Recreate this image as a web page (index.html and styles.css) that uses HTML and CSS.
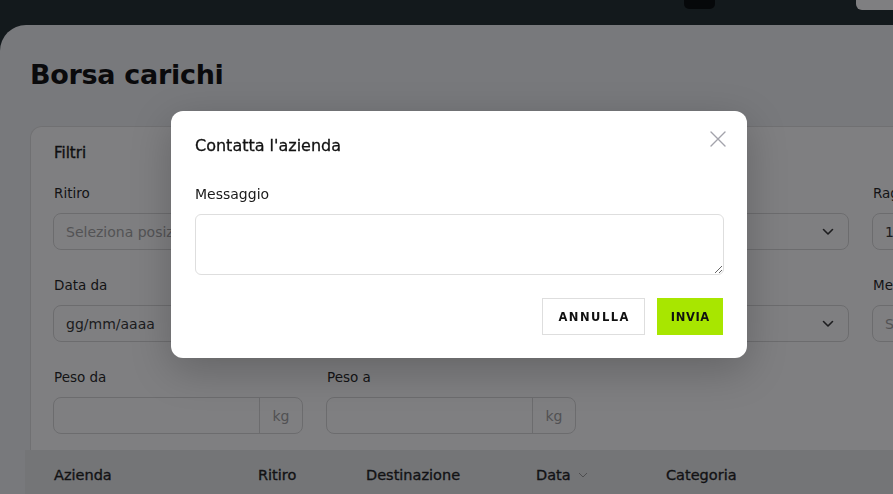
FILE: index.html
```html
<!DOCTYPE html>
<html lang="it">
<head>
<meta charset="utf-8">
<title>Borsa carichi</title>
<link rel="stylesheet" href="styles.css">
</head>
<body>
<header class="topbar">
  <span class="tb-dark"></span>
  <span class="tb-light"></span>
</header>
<main class="main">
  <h1 class="page-title">Borsa carichi</h1>
  <section class="card">
    <h2 class="card-title">Filtri</h2>
    <div class="filters">
      <div class="field">
        <label class="label">Ritiro</label>
        <div class="input"><span class="ph">Seleziona posizione</span></div>
      </div>
      <div class="field">
        <label class="label">Destinazione</label>
        <div class="input"></div>
      </div>
      <div class="field">
        <label class="label">Categoria</label>
        <div class="input select"><span></span>
          <svg class="chev" viewBox="0 0 12 8" width="12" height="8"><path d="M1.5 1.5 L6 6 L10.5 1.5" fill="none" stroke="#333" stroke-width="1.6" stroke-linecap="round" stroke-linejoin="round"/></svg>
        </div>
      </div>
      <div class="field">
        <label class="label">Raggio</label>
        <div class="input"><span class="val">100</span></div>
      </div>
      <div class="field">
        <label class="label">Data da</label>
        <div class="input"><span class="val">gg/mm/aaaa</span></div>
      </div>
      <div class="field">
        <label class="label">Data a</label>
        <div class="input"></div>
      </div>
      <div class="field">
        <label class="label">Tipo</label>
        <div class="input select"><span></span>
          <svg class="chev" viewBox="0 0 12 8" width="12" height="8"><path d="M1.5 1.5 L6 6 L10.5 1.5" fill="none" stroke="#333" stroke-width="1.6" stroke-linecap="round" stroke-linejoin="round"/></svg>
        </div>
      </div>
      <div class="field">
        <label class="label">Mezzo</label>
        <div class="input"><span class="ph">Seleziona</span></div>
      </div>
      <div class="field">
        <label class="label">Peso da</label>
        <div class="input addon"><span class="grow"></span><span class="unit">kg</span></div>
      </div>
      <div class="field">
        <label class="label">Peso a</label>
        <div class="input addon"><span class="grow"></span><span class="unit">kg</span></div>
      </div>
    </div>
  </section>
  <div class="table-head">
    <span>Azienda</span>
    <span>Ritiro</span>
    <span>Destinazione</span>
    <span class="sort">Data
      <svg viewBox="0 0 10 6" width="10" height="6"><path d="M1 1 L5 5 L9 1" fill="none" stroke="#9a9a9a" stroke-width="1"/></svg>
    </span>
    <span>Categoria</span>
  </div>
</main>

<div class="overlay">
  <div class="modal" role="dialog">
    <div class="modal-head">
      <h3 class="modal-title">Contatta l'azienda</h3>
      <button class="close" aria-label="Chiudi">
        <svg viewBox="0 0 16 16" width="16" height="16"><path d="M1 1 L15 15 M15 1 L1 15" stroke="#a3a3ab" stroke-width="1.4" stroke-linecap="round"/></svg>
      </button>
    </div>
    <label class="m-label">Messaggio</label>
    <textarea class="m-text"></textarea>
    <div class="m-actions">
      <button class="btn btn-ghost">ANNULLA</button>
      <button class="btn btn-green">INVIA</button>
    </div>
  </div>
</div>
</body>
</html>
```

FILE: styles.css
```css
* { box-sizing: border-box; }
html, body { margin: 0; padding: 0; }
body {
  font-family: "DejaVu Sans", "Noto Sans", sans-serif;
  color: #1a1a1a;
  background: #1e2a2c;
  width: 893px;
  height: 494px;
  overflow: hidden;
}
.topbar {
  height: 25px;
  display: flex;
  align-items: flex-start;
  padding-left: 684px;
  gap: 141px;
}
.tb-dark {
  width: 34px;
  height: 9px;
  background: #040808;
  border-radius: 0 0 5px 5px;
}
.tb-light {
  width: 40px;
  height: 10px;
  background: #ffffff;
  border-radius: 0 0 0 6px;
}
.main {
  background: #f0f2f4;
  border-top-left-radius: 26px;
  padding: 32px 0 0 25px;
  height: 469px;
  overflow: hidden;
}
.page-title {
  margin: 0 0 0 5px;
  font-size: 27px;
  line-height: 36px;
  letter-spacing: -0.3px;
  font-weight: bold;
  color: #0c0c0c;
}
.card {
  margin: 33px 0 0 5px;
  width: 1100px;
  background: #ffffff;
  border: 1px solid #e0e0e0;
  border-bottom: none;
  border-radius: 12px 0 0 0;
  padding: 16px 22px 16px 22px;
}
.card-title {
  margin: 0 0 20px 1px;
  font-size: 15px;
  line-height: 20px;
  font-weight: normal;
  -webkit-text-stroke: 0.35px #161616;
  color: #161616;
}
.filters {
  display: grid;
  grid-template-columns: repeat(4, 250px);
  column-gap: 23px;
  row-gap: 25px;
}
.field { display: flex; flex-direction: column; }
.label {
  font-size: 13.5px;
  line-height: 20px;
  margin: 0 0 10px 1px;
  color: #1e1e1e;
}
.input {
  height: 37px;
  border: 1px solid #d8d8d8;
  border-radius: 8px;
  background: #ffffff;
  display: flex;
  align-items: center;
  padding: 0 12px;
  font-size: 14px;
}
.ph { color: #a4a4a4; white-space: nowrap; overflow: hidden; }
.val { color: #333; }
.select { justify-content: space-between; padding-right: 14px; }
.addon { padding: 0; }
.grow { flex: 1; height: 100%; }
.unit {
  width: 43px;
  height: 100%;
  border-left: 1px solid #d8d8d8;
  display: flex;
  align-items: center;
  justify-content: center;
  color: #a0a0a0;
  font-size: 14px;
}
.table-head {
  background: #e8eaeb;
  height: 60px;
  display: grid;
  grid-template-columns: 204px 108px 170px 130px 200px;
  align-items: start;
  padding: 16px 0 0 29px;
  font-size: 14.5px;
  font-weight: normal;
  -webkit-text-stroke: 0.35px #1c1c1c;
  line-height: 18px;
  color: #1c1c1c;
}
.sort { display: flex; align-items: center; gap: 7px; }

.overlay {
  position: fixed;
  inset: 0;
  background: rgba(10, 10, 14, 0.52);
}
.modal {
  margin: 111px 0 0 171px;
  width: 576px;
  height: 247px;
  background: #ffffff;
  border-radius: 12px;
  padding: 25px 24px 23px 24px;
  box-shadow: 0 12px 40px rgba(0, 0, 0, 0.22);
}
.modal-head {
  display: flex;
  justify-content: space-between;
  align-items: flex-start;
  height: 20px;
}
.modal-title {
  margin: 0;
  font-size: 16px;
  line-height: 20px;
  font-weight: normal;
  -webkit-text-stroke: 0.3px #121212;
  color: #121212;
}
.close {
  border: 0;
  background: none;
  padding: 0;
  margin: -5px -3px 0 0;
  width: 16px;
  height: 16px;
}
.close svg { display: block; }
.m-label {
  display: block;
  margin-top: 29px;
  font-size: 14px;
  line-height: 18px;
  color: #1a1a1a;
}
.m-text {
  display: block;
  margin-top: 11px;
  width: 529px;
  height: 61px;
  border: 1px solid #dedede;
  border-radius: 6px;
  resize: vertical;
  font-family: inherit;
}
.m-actions {
  display: flex;
  justify-content: flex-end;
  gap: 12px;
  margin-top: 23px;
}
.btn {
  height: 37px;
  border: 1px solid #dedede;
  background: #ffffff;
  font-family: "DejaVu Sans", sans-serif;
  font-weight: bold;
  font-size: 11.5px;
  letter-spacing: 1.5px;
  color: #111;
  display: flex;
  align-items: center;
  justify-content: center;
  padding: 0 0 0 1.5px;
}
.btn-ghost { width: 103px; }
.btn-green { width: 66px; background: #a8e600; border-color: #a8e600; letter-spacing: 0.6px; padding-left: 0.6px; }
```
